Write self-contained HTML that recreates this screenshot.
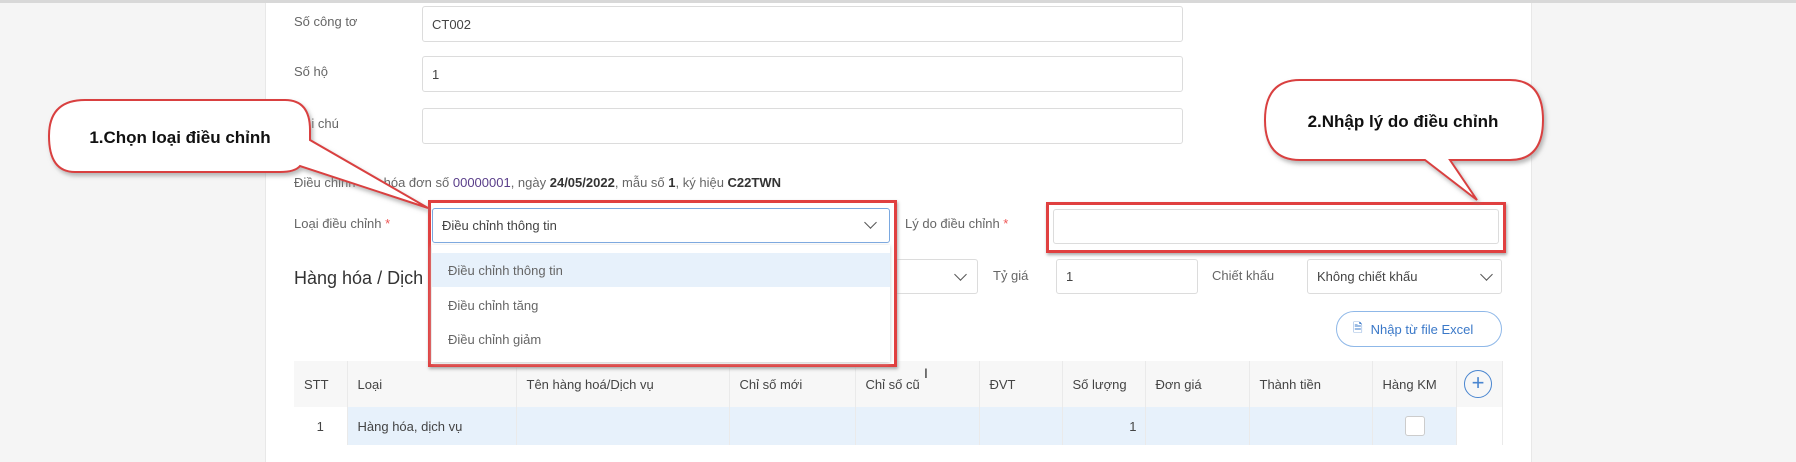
<!DOCTYPE html>
<html><head><meta charset="utf-8"><style>
*{box-sizing:border-box;margin:0;padding:0}
body{width:1796px;height:462px;background:#f5f5f5;font-family:"Liberation Sans",sans-serif;font-size:13px;color:#555;position:relative;overflow:hidden}
.a{position:absolute}
.top{left:0;top:0;width:1796px;height:3px;background:#d8d8d8}
.panel{left:265px;top:3px;width:1267px;height:459px;background:#fff;border-left:1px solid #e8e8e8;border-right:1px solid #e8e8e8}
.inp{position:absolute;border:1px solid #dcdcdc;border-radius:3px;background:#fff;padding-left:9px;color:#444;display:flex;align-items:center}
.lbl{position:absolute;color:#666}
.chev{position:absolute;width:9px;height:9px;border-right:1.5px solid #555;border-bottom:1.5px solid #555;transform:rotate(45deg)}
table{position:absolute;left:294px;top:361px;width:1208px;border-collapse:collapse;table-layout:fixed}
td,th{font-weight:normal;text-align:left;padding-left:10px;color:#444;border-right:1px solid #eaeaea}
th{height:46px;background:#f7f7f7}
td{height:38px;background:#e7f1fb}
</style></head><body>
<div class="a top"></div>
<div class="a panel"></div>
<div class="lbl" style="left:294px;top:14px">Số công tơ</div>
<div class="inp" style="left:422px;top:6px;width:761px;height:36px">CT002</div>
<div class="lbl" style="left:294px;top:64px">Số hộ</div>
<div class="inp" style="left:422px;top:56px;width:761px;height:36px">1</div>
<div class="lbl" style="left:294px;top:116px">Ghi chú</div>
<div class="inp" style="left:422px;top:108px;width:761px;height:36px"></div>
<div class="lbl" style="left:294px;top:175px">Điều chỉnh cho hóa đơn số <span style="color:#5a3e8a">00000001</span>, ngày <b style="color:#333">24/05/2022</b>, mẫu số <b style="color:#333">1</b>, ký hiệu <b style="color:#333">C22TWN</b></div>
<div class="lbl" style="left:294px;top:216px">Loại điều chỉnh <span style="color:#e55">*</span></div>
<div class="lbl" style="left:294px;top:268px;font-size:18px;color:#333">Hàng hóa / Dịch vụ</div>
<div class="inp" style="left:800px;top:259px;width:178px;height:35px"></div><div class="chev" style="left:956px;top:270px"></div>
<div class="lbl" style="left:993px;top:268px">Tỷ giá</div>
<div class="inp" style="left:1056px;top:259px;width:142px;height:35px">1</div>
<div class="lbl" style="left:1212px;top:268px">Chiết khấu</div>
<div class="inp" style="left:1307px;top:259px;width:195px;height:35px">Không chiết khấu</div><div class="chev" style="left:1482px;top:270px"></div>
<div class="inp" style="left:1336px;top:311px;width:166px;height:36px;border:1.5px solid #8fb8e8;border-radius:18px;color:#3a78c8;padding-left:16px"><span style="font-size:12px;margin-right:8px">🗎</span>Nhập từ file Excel</div>
<div class="lbl" style="left:905px;top:216px">Lý do điều chỉnh <span style="color:#e55">*</span></div>
<div class="a" style="left:1046px;top:202px;width:460px;height:51px;border:3px solid #e04040;box-shadow:1px 2px 3px #aaa"></div>
<div class="inp" style="left:1053px;top:209px;width:446px;height:35px"></div>
<table><tr><th style="width:53px">STT</th><th style="width:169px">Loại</th><th style="width:213px">Tên hàng hoá/Dịch vụ</th><th style="width:126px">Chỉ số mới</th><th style="width:124px">Chỉ số cũ</th><th style="width:83px">ĐVT</th><th style="width:83px">Số lượng</th><th style="width:104px">Đơn giá</th><th style="width:123px">Thành tiền</th><th style="width:84px">Hàng KM</th><th style="width:46px"></th></tr>
<tr><td style="background:#fff;text-align:center;padding:0">1</td><td>Hàng hóa, dịch vụ</td><td></td><td></td><td></td><td></td><td style="text-align:right;padding-right:8px">1</td><td></td><td></td><td><div style="width:20px;height:20px;border:1px solid #ccc;border-radius:3px;background:#fff;margin-left:22px"></div></td><td style="background:#fff"></td></tr></table>
<div class="a" style="left:1464px;top:370px;width:28px;height:28px;border:1.5px solid #4a86d0;border-radius:50%;color:#4a86d0;font-size:22px;line-height:24px;text-align:center">+</div>
<!-- dropdown -->
<div class="a" style="left:428px;top:200px;width:469px;height:167px;border:3px solid #e04040;box-shadow:1px 2px 3px #aaa;background:#fff"></div>
<div class="inp" style="left:432px;top:208px;width:458px;height:35px;border:1.5px solid #7aa8e0">Điều chỉnh thông tin</div><div class="chev" style="left:866px;top:218px"></div>
<div class="a" style="left:432px;top:245px;width:458px;height:117px;background:#fff;box-shadow:0 1px 4px #ccc"></div>
<div class="a" style="left:432px;top:253px;width:458px;height:34px;background:#e7f1fb"></div>
<div class="lbl" style="left:448px;top:263px">Điều chỉnh thông tin</div>
<div class="lbl" style="left:448px;top:298px">Điều chỉnh tăng</div>
<div class="lbl" style="left:448px;top:332px">Điều chỉnh giảm</div>
<div class="lbl" style="left:924px;top:365px;font-size:14px;color:#333">I</div>
<svg class="a" style="left:0;top:0" width="1796" height="462">
<defs><filter id="s"><feDropShadow dx="2" dy="3" stdDeviation="2" flood-color="#888" flood-opacity=".6"/></filter></defs>
<path d="M85,100 H285 Q310,100 310,130 V140 L428,208 L300,166 Q295,172 280,172 H75 Q49,172 49,136 Q49,100 85,100 Z" fill="#fff" stroke="#d94040" stroke-width="2" filter="url(#s)"/>
<path d="M1300,80 H1510 Q1543,80 1543,120 Q1543,160 1510,160 H1450 L1477,200 L1425,160 H1300 Q1265,160 1265,120 Q1265,80 1300,80 Z" fill="#fff" stroke="#d94040" stroke-width="2" filter="url(#s)"/>
<text x="180" y="143" text-anchor="middle" font-family="Liberation Sans,sans-serif" font-size="17" font-weight="bold" fill="#111">1.Chọn loại điều chỉnh</text>
<text x="1403" y="127" text-anchor="middle" font-family="Liberation Sans,sans-serif" font-size="17" font-weight="bold" fill="#111">2.Nhập lý do điều chỉnh</text>
</svg>
</body></html>
